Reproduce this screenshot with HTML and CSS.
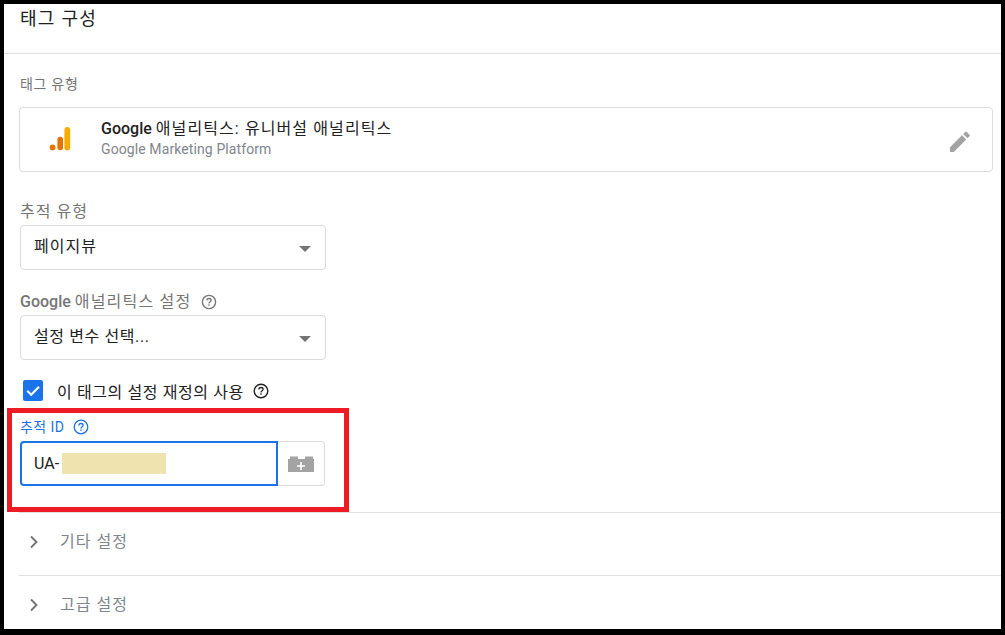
FILE: index.html
```html
<!DOCTYPE html>
<html lang="ko">
<head>
    <meta charset="UTF-8">
    <meta name="viewport" content="width=device-width, initial-scale=1.0">
    <title>태그 구성</title>
    <link rel="stylesheet" href="styles.css">
</head>
<body>
    <div class="frame">
        <!-- 제목 -->
        <header class="title-bar">
            <h1>태그 구성</h1>
        </header>

        <section class="config">
            <div class="label type-label">태그 유형</div>
            <div class="tag-card">
                <svg class="ga-logo" width="24" height="26" viewBox="0 0 24 26">
                    <circle cx="3.6" cy="20.4" r="2.9" fill="#e37400"/>
                    <rect x="8.4" y="9.7" width="5.6" height="13.6" rx="2.8" fill="#e37400"/>
                    <rect x="15.4" y="0" width="5.8" height="23.3" rx="2.9" fill="#f9ab00"/>
                </svg>
                <div class="tag-text">
                    <div class="tag-name"><span class="medium">Google</span> <span class="wide">애널리틱스: 유니버설 애널리틱스</span></div>
                    <div class="tag-sub">Google Marketing Platform</div>
                </div>
                <svg class="edit-icon" width="24" height="24" viewBox="0 0 24 24">
                    <path fill="#a3a3a3" d="M0.8 19.6V23.2H4.4L15.1 12.5L11.5 8.9ZM17.8 9.8C18.2 9.4 18.2 8.8 17.8 8.4L15.6 6.2C15.2 5.8 14.6 5.8 14.2 6.2L12.6 7.8L16.2 11.4Z" transform="translate(-1.6 -3.2) scale(1.18)"/>
                </svg>
            </div>

            <div class="label track-label">추적 유형</div>
            <div class="select">
                <span class="select-text">페이지뷰</span>
                <span class="arrow"></span>
            </div>

            <div class="label setting-label">
                <span><span class="medium">Google</span> <span class="wide">애널리틱스 설정</span></span>
                <svg class="help" width="16" height="16" viewBox="0 0 16 16">
                    <circle cx="8" cy="8" r="6.6" fill="none" stroke="#757575" stroke-width="1.4"/>
                    <path d="M5.9 6.4C5.9 5.2 6.9 4.5 8 4.5C9.2 4.5 10.1 5.2 10.1 6.3C10.1 7.7 8 7.7 8 9.4" fill="none" stroke="#757575" stroke-width="1.3"/>
                    <rect x="7.3" y="10.4" width="1.4" height="1.4" fill="#757575"/>
                </svg>
            </div>
            <div class="select">
                <span class="select-text narrow">설정 변수 선택...</span>
                <span class="arrow"></span>
            </div>

            <div class="check-row">
                <span class="checkbox">
                    <svg width="20" height="21" viewBox="0 0 20 21">
                        <path d="M4.2 10.8L8.2 14.8L16 6.8" fill="none" stroke="#fff" stroke-width="2.2"/>
                    </svg>
                </span>
                <span class="check-text">이 태그의 설정 재정의 사용</span>
                <svg class="help" width="16" height="16" viewBox="0 0 16 16">
                    <circle cx="8" cy="8" r="6.8" fill="none" stroke="#212121" stroke-width="1.4"/>
                    <path d="M5.9 6.4C5.9 5.2 6.9 4.5 8 4.5C9.2 4.5 10.1 5.2 10.1 6.3C10.1 7.7 8 7.7 8 9.4" fill="none" stroke="#212121" stroke-width="1.3"/>
                    <rect x="7.3" y="10.4" width="1.4" height="1.4" fill="#212121"/>
                </svg>
            </div>

            <div class="label id-label">
                추적 ID
                <svg class="help" width="16" height="16" viewBox="0 0 16 16">
                    <circle cx="8" cy="8" r="6.8" fill="none" stroke="#1a73e8" stroke-width="1.3"/>
                    <path d="M5.9 6.4C5.9 5.2 6.9 4.5 8 4.5C9.2 4.5 10.1 5.2 10.1 6.3C10.1 7.7 8 7.7 8 9.4" fill="none" stroke="#1a73e8" stroke-width="1.3"/>
                    <rect x="7.3" y="10.4" width="1.4" height="1.4" fill="#1a73e8"/>
                </svg>
            </div>
            <div class="id-field">
                <div class="id-input">UA-<span class="masked"></span></div>
                <div class="id-addon">
                    <svg width="26" height="16" viewBox="0 0 26 16">
                        <path fill="#a3a3a3" d="M0 3H2V0.5H10V3H17V0.5H25V3H26V16H0Z"/>
                        <path fill="#fff" d="M12.2 6H13.8V9.2H17V10.8H13.8V14H12.2V10.8H9V9.2H12.2Z"/>
                    </svg>
                </div>
            </div>
        </section>

        <!-- 접힌 영역 -->
        <div class="fold first">
            <svg width="10" height="14" viewBox="0 0 10 14"><path d="M2 1.5L7.5 7L2 12.5" fill="none" stroke="#757575" stroke-width="1.9"/></svg>
            <span>기타 설정</span>
        </div>
        <div class="fold">
            <svg width="10" height="14" viewBox="0 0 10 14"><path d="M2 1.5L7.5 7L2 12.5" fill="none" stroke="#757575" stroke-width="1.9"/></svg>
            <span>고급 설정</span>
        </div>

        <!-- 빨간 강조 상자 -->
        <div class="highlight"></div>
    </div>
</body>
</html>
```

FILE: styles.css
```css
* {
    box-sizing: border-box;
}
html, body {
    height: 100%;
}
body {
    margin: 0;
    background-color: #000;
    padding: 4px 4px 6px 4px;
    font-family: Roboto, "Noto Sans CJK KR", sans-serif;
    color: #212121;
    overflow: hidden;
}
.frame {
    position: relative;
    height: 100%;
    background-color: #fff;
    overflow: hidden;
}
.medium {
    font-weight: 500;
}
.wide {
    letter-spacing: 1.1px;
}

/* 제목 */
.title-bar {
    height: 50px;
    border-bottom: 1px solid #e0e0e0;
    padding: 2px 16px 0;
}
.title-bar h1 {
    margin: 0;
    font-size: 18px;
    font-weight: 400;
    line-height: 26px;
    letter-spacing: 1.3px;
}

/* 본문 */
.config {
    padding: 0 15px;
}
.label {
    font-size: 14px;
    line-height: 20px;
    color: #757575;
    padding-left: 1px;
    display: flex;
    align-items: center;
    gap: 4px;
}
.type-label {
    margin-top: 20px;
    letter-spacing: 0.7px;
}
.track-label {
    margin-top: 30px;
    font-size: 16px;
    letter-spacing: 1px;
}
.setting-label {
    margin-top: 22px;
    font-size: 16px;
    gap: 10px;
}
.setting-label .wide {
    letter-spacing: 1.2px;
}

/* 태그 카드 */
.tag-card {
    margin-top: 13px;
    height: 65px;
    width: 974px;
    border: 1px solid #dadce0;
    border-radius: 4px;
    display: flex;
    align-items: center;
}
.ga-logo {
    margin-left: 29px;
    flex-shrink: 0;
}
.tag-text {
    margin-left: 28px;
    flex: 1;
}
.tag-name {
    font-size: 16px;
    line-height: 20px;
    color: #212121;
    margin-top: -1px;
}
.tag-sub {
    font-size: 14px;
    line-height: 20px;
    letter-spacing: 0.1px;
    color: #80868b;
}
.edit-icon {
    margin-right: 18px;
    flex-shrink: 0;
}

/* 선택 상자 */
.select {
    margin-top: 3px;
    margin-left: 1px;
    width: 306px;
    height: 45px;
    border: 1px solid #dadce0;
    border-radius: 4px;
    display: flex;
    align-items: center;
    justify-content: space-between;
    padding: 0 14px 0 13px;
    font-size: 16px;
    color: #212121;
}
.select-text {
    letter-spacing: 1px;
    margin-top: -5px;
}
.select-text.narrow {
    letter-spacing: 0.6px;
}
.arrow {
    width: 0;
    height: 0;
    border-left: 6px solid transparent;
    border-right: 6px solid transparent;
    border-top: 6px solid #757575;
    margin-top: 2px;
}

/* 체크박스 */
.check-row {
    margin-top: 20px;
    height: 21px;
    padding-left: 4px;
    display: flex;
    align-items: center;
}
.checkbox {
    width: 20px;
    height: 21px;
    background-color: #1a73e8;
    border-radius: 2px;
    display: block;
}
.checkbox svg {
    display: block;
}
.check-text {
    margin-left: 14px;
    font-size: 16px;
    letter-spacing: 0.6px;
}
.check-row .help {
    margin-left: 9px;
}

/* 추적 ID */
.id-label {
    margin-top: 16px;
    color: #1a73e8;
    font-size: 14px;
    letter-spacing: 0.4px;
    gap: 9px;
}
.id-field {
    margin-top: 4px;
    margin-left: 1px;
    display: flex;
    width: 305px;
    height: 45px;
}
.id-input {
    width: 258px;
    border: 2px solid #1a73e8;
    border-radius: 4px 0 0 4px;
    display: flex;
    align-items: center;
    padding-left: 12px;
    font-size: 16px;
    color: #212121;
}
.masked {
    display: block;
    width: 104px;
    height: 21px;
    margin-left: 3px;
    background-color: #efe3af;
}
.id-addon {
    flex: 1;
    border: 1px solid #dadce0;
    border-left: none;
    border-radius: 0 4px 4px 0;
    display: flex;
    align-items: center;
    justify-content: center;
}

/* 접힌 영역 */
.fold {
    margin-left: 15px;
    height: 63px;
    border-top: 1px solid #e0e0e0;
    display: flex;
    align-items: center;
    padding: 0 0 4px 10px;
    font-size: 16px;
    letter-spacing: 1px;
    color: #80868b;
}
.fold span {
    margin-left: 21px;
    margin-top: -4px;
}
.fold.first {
    margin-top: 26px;
}

/* 강조 표시 */
.highlight {
    position: absolute;
    left: 3px;
    top: 404px;
    width: 342px;
    height: 104px;
    border: 5px solid #ed1c24;
}
```
